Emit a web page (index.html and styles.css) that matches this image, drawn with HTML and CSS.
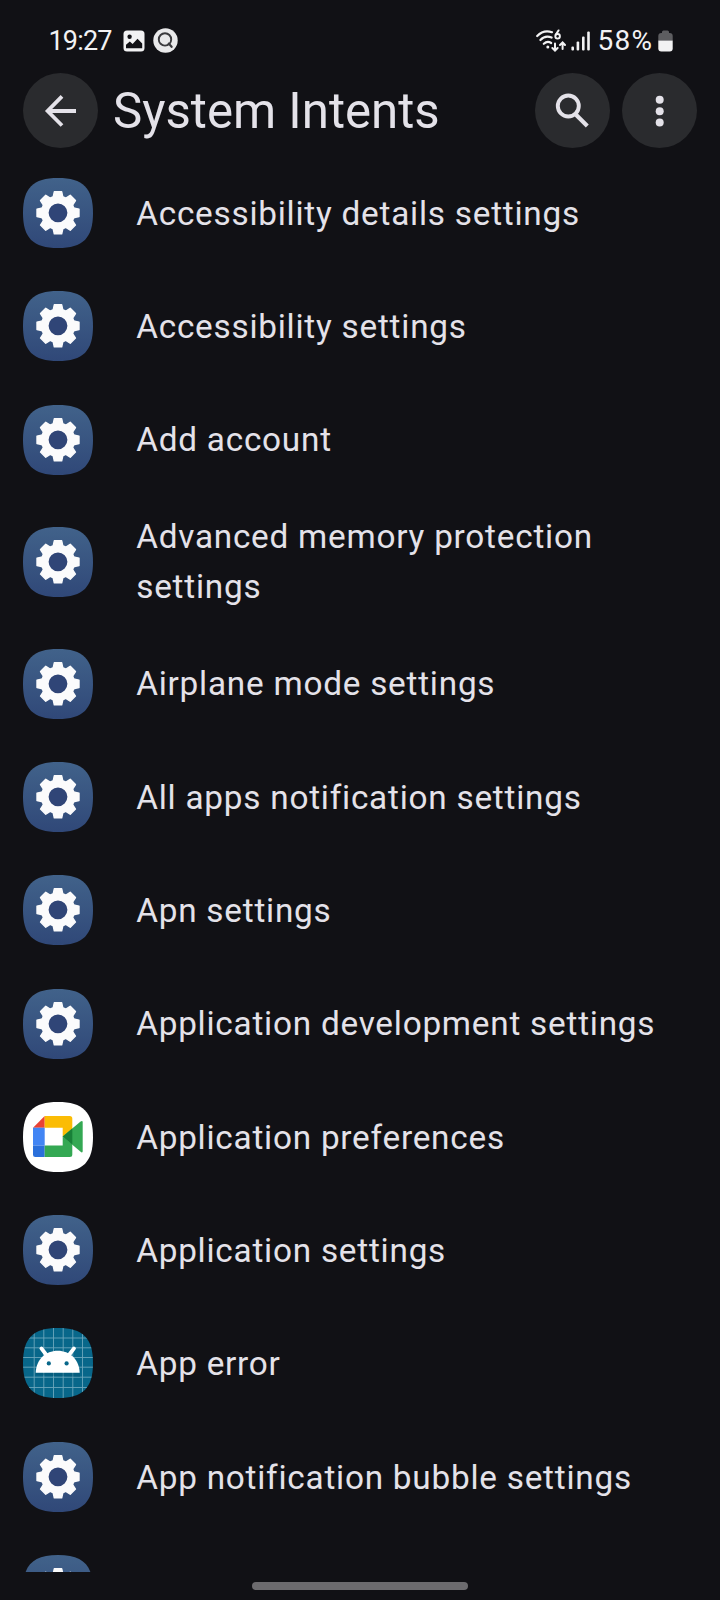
FILE: index.html
```
<!DOCTYPE html>
<html lang="en">
<head>
  <meta charset="UTF-8" />
  <meta name="viewport" content="width=device-width, initial-scale=1.0"/>
  <title>System Intents</title>
  <link rel="stylesheet" href="styles.css">
</head>
<body>

<!-- Shared app icons -->
<svg class="defs" width="0" height="0">
  <defs>
    <linearGradient id="blue" x1="0" y1="0" x2="0" y2="1">
      <stop offset="0" stop-color="#41628a"/>
      <stop offset="1" stop-color="#304878"/>
    </linearGradient>
    <clipPath id="squircle">
      <path d="M35 0C60 0 70 10 70 35S60 70 35 70 0 60 0 35 10 0 35 0Z"/>
    </clipPath>
    <path id="tooth" d="M-4.9 -15.5L-3.7 -21H3.7L4.9 -15.5Z" stroke-width="1.4" stroke-linejoin="round"/>
    <symbol id="settings" viewBox="0 0 70 70">
      <rect width="70" height="70" fill="url(#blue)" clip-path="url(#squircle)"/>
      <g transform="translate(35 34.8)" fill="#fbfbfc" stroke="#fbfbfc">
        <use href="#tooth"/>
        <use href="#tooth" transform="rotate(45)"/>
        <use href="#tooth" transform="rotate(90)"/>
        <use href="#tooth" transform="rotate(135)"/>
        <use href="#tooth" transform="rotate(180)"/>
        <use href="#tooth" transform="rotate(225)"/>
        <use href="#tooth" transform="rotate(270)"/>
        <use href="#tooth" transform="rotate(315)"/>
        <circle r="13.3" fill="#304577" stroke-width="7.8"/>
      </g>
    </symbol>
    <symbol id="meet" viewBox="0 0 70 70">
      <rect width="70" height="70" fill="#fff" clip-path="url(#squircle)"/>
      <path d="M10 25.7L21.7 14V25.7Z" fill="#e94235"/>
      <path d="M10 25.7H21.7V43.5H10Z" fill="#4285f4"/>
      <path d="M10 43.5H21.7V55H12.3Q10 55 10 52.7Z" fill="#2a6fdb"/>
      <path d="M21.7 14H46.8Q49.3 14 49.3 16.5V27L39.7 34.7V25.7H21.7Z" fill="#fbbc04"/>
      <path d="M21.7 43.5H39.7V34.5L49.3 42V52.5Q49.3 55 46.8 55H21.7Z" fill="#34a853"/>
      <path d="M39.7 34.5L57.3 19.8Q59.7 18 59.7 20.5V49Q59.7 51.5 57.3 49.5Z" fill="#34a853"/>
      <path d="M39.7 34.5L49.3 26.6V42.4Z" fill="#188038"/>
    </symbol>
    <symbol id="android" viewBox="0 0 70 70">
      <g clip-path="url(#squircle)">
        <rect width="70" height="70" fill="#08678a"/>
        <path d="M11.2 0V70M20.8 0V70M30.5 0V70M40.2 0V70M49.8 0V70M59.5 0V70M0 10H70M0 19.8H70M0 29.5H70M0 39.2H70M0 49.2H70M0 59.5H70" stroke="#6ba6bb" stroke-width="0.9"/>
        <path d="M13 45H57V49L13 47Z" fill="#04536f" opacity="0.4"/>
      </g>
      <path d="M12.7 44.7C13.2 31.5 22.5 22.7 34.7 22.7S56.2 31.5 56.7 44.7Z" fill="#fff"/>
      <path d="M18.4 20.4L23.4 27M51 20.4L46 27" stroke="#fff" stroke-width="3.8" stroke-linecap="round"/>
      <circle cx="25.8" cy="35.4" r="2.1" fill="#08678a"/>
      <circle cx="43.6" cy="35.4" r="2.1" fill="#08678a"/>
    </symbol>
  </defs>
</svg>

<div class="screen">
  <div class="status-bar">
    <span class="clock">19:27</span>
    <svg class="picture" width="22" height="22" viewBox="0 0 22 22">
      <rect x="0.5" y="0.5" width="21" height="21" rx="3.5" fill="#f2f2f3"/>
      <circle cx="6.6" cy="6.8" r="2.2" fill="#111115"/>
      <path d="M3 18.2V14.8L6.8 11.4L9.6 14L14.5 8.8L19.2 13.6V18.2Z" fill="#111115"/>
    </svg>
    <svg class="finder" width="25" height="25" viewBox="0 0 25 25">
      <circle cx="12.5" cy="12.5" r="12.2" fill="#e9e9ea"/>
      <circle cx="12" cy="11.4" r="6.2" fill="none" stroke="#3a3a3d" stroke-width="1.9"/>
      <path d="M15.8 15.6L18.6 18.8" stroke="#3a3a3d" stroke-width="2.2" stroke-linecap="round"/>
    </svg>
    <svg class="wifi" width="30" height="24" viewBox="0 0 30 24" fill="none" stroke="#f2f2f3" stroke-width="2.2" stroke-linecap="round">
      <path d="M1.2 7C5.2 2.8 11 1.6 16 3.2"/>
      <path d="M4.4 11C7.6 7.6 11.8 7 15.6 8.6"/>
      <path d="M7.8 14.8C10 12.8 13 12.6 15.2 14"/>
      <circle cx="11.8" cy="18" r="1.5" fill="#f2f2f3" stroke="none"/>
      <path d="M22.6 1.4L19.8 5.6" stroke-width="1.9"/>
      <circle cx="21.6" cy="7.3" r="2.3" stroke-width="1.9"/>
      <path d="M19 14.4V21.4M16.4 19L19 21.6L21.6 19M26.6 20V13.8M24 16L26.6 13.4L29 16" stroke-width="2"/>
    </svg>
    <svg class="signal" width="20" height="20" viewBox="0 0 20 20" fill="#f2f2f3">
      <rect x="0.4" y="15.6" width="2.6" height="4" rx="1"/>
      <rect x="5.6" y="10.6" width="2.6" height="9" rx="1"/>
      <rect x="11" y="5.6" width="2.6" height="14" rx="1"/>
      <rect x="16.2" y="0.4" width="2.6" height="19.2" rx="1"/>
    </svg>
    <span class="percent">58%</span>
    <svg class="battery" width="15" height="22" viewBox="0 0 15 22">
      <path d="M0.3 10.5V6Q0.3 3 3.3 3H4V2Q4 0.5 5.5 0.5H9.5Q11 0.5 11 2V3H11.7Q14.7 3 14.7 6V10.5Z" fill="#5d5d60"/>
      <path d="M0.3 10.5H14.7V18.5Q14.7 21.5 11.7 21.5H3.3Q0.3 21.5 0.3 18.5Z" fill="#f2f2f3"/>
    </svg>
  </div>

  <header class="top-bar">
    <button class="round-button" aria-label="Back">
      <svg width="75" height="75" viewBox="0 0 75 75" fill="none" stroke="#e4e2e9" stroke-width="3.8">
        <path d="M53 38H25M39 23.3L24.6 38L39 52.5"/>
      </svg>
    </button>
    <h1>System Intents</h1>
    <button class="round-button" aria-label="Search">
      <svg width="75" height="75" viewBox="0 0 75 75" fill="none" stroke="#e4e2e9">
        <circle cx="33.3" cy="33" r="10.5" stroke-width="3.9"/>
        <path d="M41 41.8L52.3 53" stroke-width="4.2"/>
      </svg>
    </button>
    <button class="round-button" aria-label="More options">
      <svg width="75" height="75" viewBox="0 0 75 75" fill="#e4e2e9">
        <circle cx="37.7" cy="26.8" r="4"/>
        <circle cx="37.7" cy="38.2" r="4"/>
        <circle cx="37.7" cy="49.4" r="4"/>
      </svg>
    </button>
  </header>

  <ul class="intents">
    <li><svg class="app-icon"><use href="#settings"/></svg><span>Accessibility details settings</span></li>
    <li><svg class="app-icon"><use href="#settings"/></svg><span>Accessibility settings</span></li>
    <li><svg class="app-icon"><use href="#settings"/></svg><span>Add account</span></li>
    <li class="two-line"><svg class="app-icon"><use href="#settings"/></svg><span>Advanced memory protection settings</span></li>
    <li><svg class="app-icon"><use href="#settings"/></svg><span>Airplane mode settings</span></li>
    <li><svg class="app-icon"><use href="#settings"/></svg><span>All apps notification settings</span></li>
    <li><svg class="app-icon"><use href="#settings"/></svg><span>Apn settings</span></li>
    <li><svg class="app-icon"><use href="#settings"/></svg><span>Application development settings</span></li>
    <li><svg class="app-icon"><use href="#meet"/></svg><span>Application preferences</span></li>
    <li><svg class="app-icon"><use href="#settings"/></svg><span>Application settings</span></li>
    <li><svg class="app-icon"><use href="#android"/></svg><span>App error</span></li>
    <li><svg class="app-icon"><use href="#settings"/></svg><span>App notification bubble settings</span></li>
    <li><svg class="app-icon"><use href="#settings"/></svg></li>
  </ul>

  <div class="nav-bar"><div class="handle"></div></div>
</div>

</body>
</html>
```
FILE: styles.css
```
body {
  margin: 0;
  background: #111115;
  color: #e4e2e9;
  font-family: Roboto, sans-serif;
}

.defs {
  position: absolute;
}

.screen {
  width: 720px;
  height: 1600px;
  overflow: hidden;
  display: flex;
  flex-direction: column;
}

.status-bar {
  height: 73px;
  box-sizing: border-box;
  padding: 8px 47.4px 0 48.5px;
  display: flex;
  align-items: center;
  flex-shrink: 0;
  color: #f2f2f3;
  font-size: 27px;
}

.clock {
  width: 74.5px;
  letter-spacing: -0.8px;
  white-space: nowrap;
}

.finder {
  margin-left: 8px;
}

.wifi {
  margin-left: auto;
}

.signal {
  margin-left: 5px;
}

.percent {
  width: 58px;
  margin-left: 7px;
  font-size: 28px;
  letter-spacing: 1.2px;
  white-space: nowrap;
}

.battery {
  margin-left: 2px;
}

.top-bar {
  height: 75px;
  padding: 0 23.2px 0 23px;
  display: flex;
  align-items: center;
  gap: 12px;
  flex-shrink: 0;
}

.top-bar h1 {
  flex: 1;
  margin: 0 0 0 3px;
  font-size: 49.2px;
  font-weight: 400;
  line-height: 60px;
}

.round-button {
  width: 75px;
  height: 75px;
  padding: 0;
  border: none;
  border-radius: 50%;
  background: #2a2b2e;
  cursor: pointer;
}

.round-button svg {
  display: block;
}

.intents {
  height: 1415.8px;
  margin: 0;
  padding: 8.2px 0 0;
  list-style: none;
  overflow: hidden;
  flex-shrink: 0;
}

.intents li {
  height: 113.33px;
  padding: 0 23.3px;
  display: flex;
  align-items: center;
  gap: 42.9px;
  font-size: 33.3px;
  line-height: 50px;
  letter-spacing: 0.77px;
}

.intents span {
  padding-top: 1.6px;
}

.intents .two-line {
  height: 130.7px;
}

.app-icon {
  width: 70px;
  height: 70px;
  flex-shrink: 0;
}

.nav-bar {
  flex: 1;
  padding-top: 10.5px;
}

.handle {
  width: 216px;
  height: 8px;
  margin: 0 auto;
  border-radius: 4px;
  background: #6c6b6e;
}
```
